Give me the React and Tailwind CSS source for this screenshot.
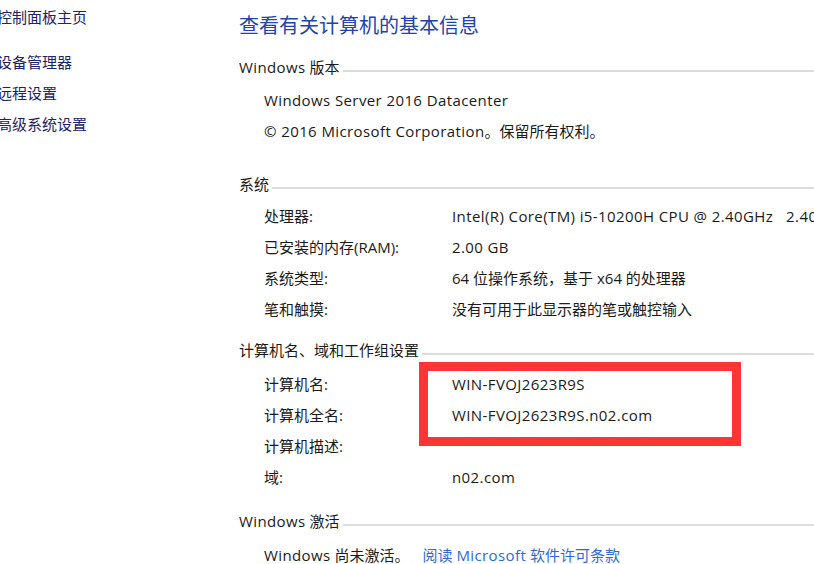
const font = { fontFamily: '"Open Sans", "Noto Sans CJK SC", sans-serif' }

function Lat({ children }) {
  return <span className="tracking-[0.4px]">{children}</span>
}

function SectionHeader({ children, className = '' }) {
  return (
    <div className={`flex h-[31px] items-center ${className}`}>
      <span className="whitespace-nowrap text-[15px] text-[#1a1a1a]">{children}</span>
      <div className="ml-[3px] mt-[6px] h-[2px] flex-1 bg-[#dcdcdc]" />
    </div>
  )
}

function InfoRow({ label, value }) {
  return (
    <div className="flex h-[31px] items-center whitespace-pre pl-[25px] text-[15px] text-[#1a1a1a]">
      <span className="w-[188px] shrink-0">{label}</span>
      <span>{value}</span>
    </div>
  )
}

export default function App() {
  const system = [
    ['处理器:', <Lat>Intel(R) Core(TM) i5-10200H CPU @ 2.40GHz   2.40GHz</Lat>],
    ['已安装的内存(RAM):', <Lat>2.00 GB</Lat>],
    ['系统类型:', '64 位操作系统，基于 x64 的处理器'],
    ['笔和触摸:', '没有可用于此显示器的笔或触控输入'],
  ]
  const names = [
    ['计算机名:', <Lat>WIN-FVOJ2623R9S</Lat>],
    ['计算机全名:', <Lat>WIN-FVOJ2623R9S.n02.com</Lat>],
    ['计算机描述:', ''],
    ['域:', <Lat>n02.com</Lat>],
  ]

  return (
    <div className="flex h-[564px] w-[814px] overflow-hidden bg-white" style={font}>
      <aside className="w-[239px] shrink-0 text-[15px] text-[#1c2366]">
        <div className="-ml-[3px] mt-[4px] flex flex-col">
          <div className="h-[26px] leading-[26px]">控制面板主页</div>
          <div className="mt-[17px] h-[31px] leading-[31px]">设备管理器</div>
          <div className="h-[31px] leading-[31px]">远程设置</div>
          <div className="h-[31px] leading-[31px]">高级系统设置</div>
        </div>
      </aside>

      <main className="min-w-0 flex-1">
        <h1 className="mt-[10px] h-[32px] whitespace-nowrap text-[20px] leading-[32px] text-[#2045aa]">
          查看有关计算机的基本信息
        </h1>

        <SectionHeader className="mt-[10px]">
          <Lat>Windows</Lat> 版本
        </SectionHeader>
        <div className="mt-[2px] flex flex-col">
          <div className="flex h-[31px] items-center whitespace-nowrap pl-[25px] text-[15px] text-[#1a1a1a]">
            <Lat>Windows Server 2016 Datacenter</Lat>
          </div>
          <div className="flex h-[31px] items-center whitespace-nowrap pl-[25px] text-[15px] text-[#1a1a1a]">
            <Lat>© 2016 Microsoft Corporation</Lat>。保留所有权利。
          </div>
        </div>

        <SectionHeader className="mt-[22px]">系统</SectionHeader>
        <div className="mt-[1px] flex flex-col">
          {system.map(([l, v]) => (
            <InfoRow key={l} label={l} value={v} />
          ))}
        </div>

        <SectionHeader className="mt-[10px]">计算机名、域和工作组设置</SectionHeader>
        <div className="relative mt-[3px] flex flex-col">
          {names.map(([l, v]) => (
            <InfoRow key={l} label={l} value={v} />
          ))}
          <div className="absolute left-[180px] top-[-7px] h-[84px] w-[322px] border-[9px] border-[#ff3434]" />
        </div>

        <SectionHeader className="mt-[13px]">
          <Lat>Windows</Lat> 激活
        </SectionHeader>
        <div className="mt-[3px] flex h-[31px] items-center whitespace-nowrap pl-[25px] text-[15px] text-[#1a1a1a]">
          <span>
            <Lat>Windows</Lat> 尚未激活。
          </span>
          <span className="ml-[13px] text-[#2c6cd0]">
            阅读 <Lat>Microsoft</Lat> 软件许可条款
          </span>
        </div>
      </main>
    </div>
  )
}
